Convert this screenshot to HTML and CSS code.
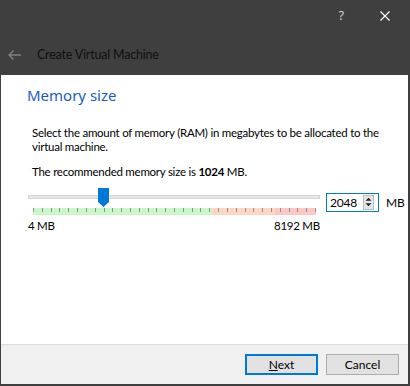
FILE: index.html
```html
<!DOCTYPE html>
<html lang="en">
<head>
  <meta charset="UTF-8">
  <title>Create Virtual Machine</title>
  <link rel="stylesheet" href="styles.css">
</head>
<body>
  <div class="window">
    <div class="titlebar">
      <span class="help">?</span>
      <svg class="close" width="10" height="10" viewBox="0 0 10 10">
        <path d="M0.5 0.5 L9.5 9.5 M9.5 0.5 L0.5 9.5" stroke="#ffffff" stroke-width="1.2" fill="none"/>
      </svg>
    </div>

    <div class="header">
      <svg class="back" width="13" height="10" viewBox="0 0 13 10">
        <path d="M1 5 H13 M5.5 0.5 L1 5 L5.5 9.5" stroke="#808080" stroke-width="1.4" fill="none"/>
      </svg>
      <span class="title">Create Virtual Machine</span>
    </div>

    <div class="content">
      <h2>Memory size</h2>
      <p class="desc">Select the amount of memory (RAM) in megabytes to be allocated to the virtual machine.</p>
      <p class="desc">The recommended memory size is <b>1024</b> MB.</p>

      <div class="slider-row">
        <div class="slider">
          <div class="track"></div>
          <!-- handle sits over the track -->
          <svg class="handle" width="11" height="19" viewBox="0 0 11 19">
            <path d="M0 0 H11 V14 L5.5 19 L0 14 Z" fill="#0078d7"/>
          </svg>
          <div class="ticks">
            <span></span><span></span><span></span><span></span><span></span><span></span>
            <span></span><span></span><span></span><span></span><span></span><span></span>
            <span></span><span></span><span></span><span></span><span></span><span></span>
            <span></span><span></span><span></span><span></span><span></span><span></span>
            <span></span><span></span><span></span><span></span><span></span><span></span>
            <span></span><span></span><span></span>
          </div>
          <div class="limits">
            <span>4 MB</span>
            <span>8192 MB</span>
          </div>
        </div>

        <div class="spinbox">
          <span class="value">2048</span>
          <div class="spin">
            <svg width="10" height="7" viewBox="0 0 10 7"><path d="M1.5 5.5 L5 2 L8.5 5.5 Z" fill="#222"/></svg>
            <svg width="10" height="7" viewBox="0 0 10 7"><path d="M1.5 1.5 L5 5 L8.5 1.5 Z" fill="#222"/></svg>
          </div>
        </div>
        <span class="unit">MB</span>
      </div>
    </div>

    <div class="footer">
      <button class="btn default"><u>N</u>ext</button>
      <button class="btn">Cancel</button>
    </div>
  </div>
</body>
</html>
```

FILE: styles.css
```css
* {
  margin: 0;
  padding: 0;
  box-sizing: border-box;
}

body {
  font-family: Lato, "Noto Sans", sans-serif;
  font-size: 11.5px;
  letter-spacing: -0.25px;
  background-color: #3f3f3f;
  color: #000000;
}

.window {
  width: 410px;
  height: 386px;
  display: flex;
  flex-direction: column;
  padding: 0 2px 2px 1px;
}

.titlebar {
  height: 32px;
  display: flex;
  align-items: center;
  justify-content: flex-end;
  padding-right: 18px;
}

.help {
  font-family: "Noto Sans", sans-serif;
  color: #d0d0d0;
  font-size: 13px;
  margin-right: 36px;
  margin-top: -2px;
}

.header {
  height: 43px;
  display: flex;
  align-items: center;
  padding-left: 7px;
  padding-top: 2px;
}

.header .title {
  margin-left: 16px;
  font-size: 12.5px;
  letter-spacing: -0.2px;
  color: #101010;
}

.content {
  flex: 1;
  background-color: #ffffff;
  padding: 10px 0 0 26px;
}

h2 {
  font-family: "Noto Sans", sans-serif;
  font-weight: normal;
  font-size: 15px;
  letter-spacing: 0;
  color: #1c5ac4;
  line-height: 20px;
}

.desc {
  margin-left: 5px;
  line-height: 14px;
  width: 352px;
}

h2 + .desc {
  margin-top: 21px;
}

.desc + .desc {
  margin-top: 11px;
}

.slider-row {
  display: flex;
  align-items: flex-start;
  margin-top: 9px;
  margin-left: 1px;
}

.slider {
  position: relative;
  width: 292px;
  padding-top: 7px;
}

.track {
  height: 4px;
  background-color: #e7e7e7;
  border: 1px solid #d6d6d6;
}

.handle {
  position: absolute;
  left: 70px;
  top: 0;
}

.ticks {
  margin: 9px 4px 0 5px;
  height: 7px;
  display: flex;
  justify-content: space-between;
  background: linear-gradient(to right,
    #c8f8c8 0, #c8f8c8 179px,
    #ffd6bf 179px, #ffd6bf 242px,
    #ffc6c6 242px, #ffc6c6 100%);
}

.ticks span {
  width: 1px;
  height: 4px;
  background-color: #8f8f8f;
}

.limits {
  display: flex;
  justify-content: space-between;
  margin-top: 4px;
  line-height: 14px;
}

.spinbox {
  margin-left: 6px;
  margin-top: 5px;
  width: 53px;
  height: 19px;
  border: 1px solid #0078d7;
  display: flex;
  align-items: center;
  justify-content: space-between;
  padding: 0 4px 0 3px;
  font-size: 12px;
}

.spin {
  width: 11px;
  height: 15px;
  display: flex;
  flex-direction: column;
  background-color: #e6e6e6;
  border: 1px solid #bcbcbc;
}

.spin svg {
  display: block;
  width: 9px;
  height: 6px;
  margin: 0 auto;
}

.unit {
  margin-left: 7px;
  margin-top: 7px;
  font-size: 12px;
}

.footer {
  height: 40px;
  background-color: #f0f0f0;
  border-top: 1px solid #dcdcdc;
  display: flex;
  justify-content: flex-end;
  align-items: flex-start;
  gap: 8px;
  padding: 9px 9px 0 0;
}

.btn {
  width: 73px;
  height: 21px;
  font-family: inherit;
  font-size: 12px;
  letter-spacing: 0;
  background-color: #e1e1e1;
  border: 1px solid #adadad;
  color: #000000;
}

.btn.default {
  border: 2px solid #0078d7;
}
```
